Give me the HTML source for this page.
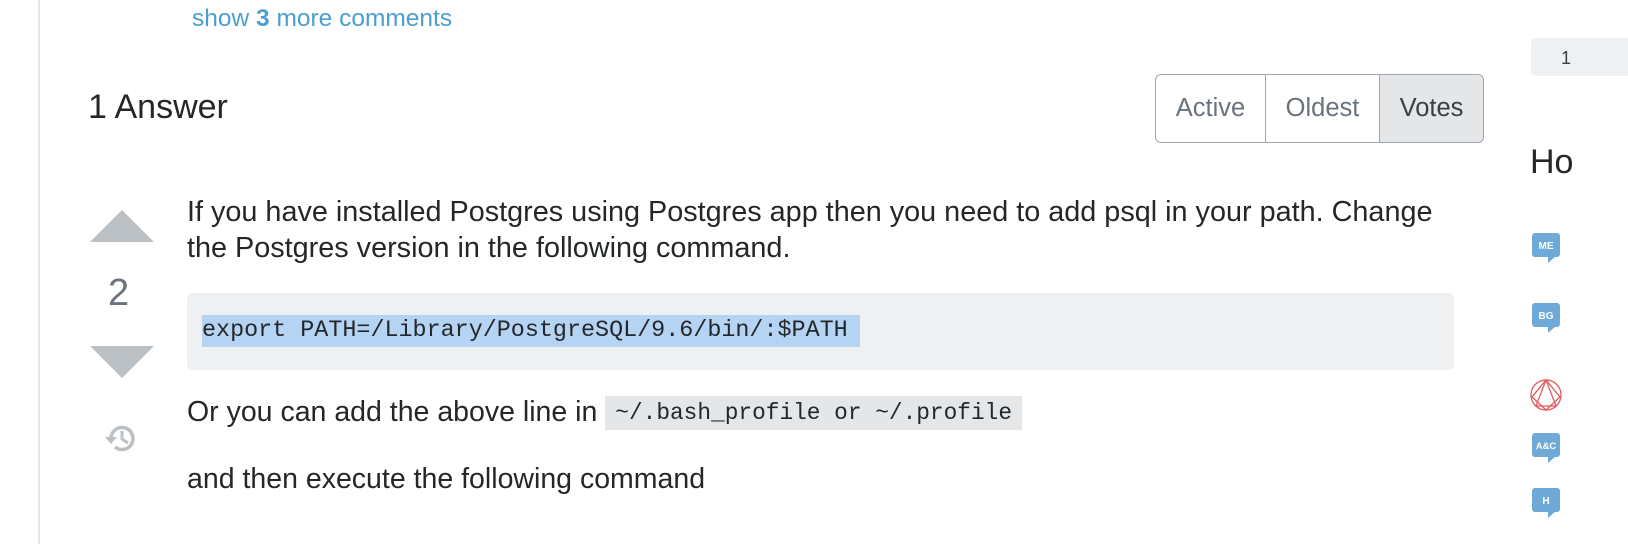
<!DOCTYPE html>
<html><head><meta charset="utf-8"><style>
body{margin:0;width:1628px;height:544px;overflow:hidden;background:#fff;font-family:"Liberation Sans",Arial,sans-serif;position:relative;color:#242729}
.a{position:absolute;white-space:nowrap}
.mono{font-family:"Liberation Mono",monospace}
</style></head><body>
<div class="a" style="left:38px;top:0;width:2px;height:544px;background:#e4e6e8"></div>
<div class="a" style="left:192px;top:5px;font-size:24.5px;color:#4a9fd0">show <b>3</b> more comments</div>
<div class="a" style="left:88px;top:88px;font-size:34px;color:#242729">1 Answer</div>
<div class="a" style="left:1155px;top:74px;width:327px;height:67px;border:1.5px solid #9fa6ad;border-radius:6px;overflow:hidden;display:flex;font-size:25.5px;color:#6a737c">
 <div style="width:109px;border-right:1.5px solid #9fa6ad;display:flex;align-items:center;justify-content:center">Active</div>
 <div style="width:113px;border-right:1.5px solid #9fa6ad;display:flex;align-items:center;justify-content:center">Oldest</div>
 <div style="flex:1;background:#e4e6e8;color:#3b4045;display:flex;align-items:center;justify-content:center">Votes</div>
</div>
<svg class="a" style="left:90px;top:210px" width="64" height="32"><polygon points="32,0 64,32 0,32" fill="#bbc0c4"/></svg>
<div class="a" style="left:108px;top:272px;font-size:38px;color:#6a737c">2</div>
<svg class="a" style="left:90px;top:346px" width="64" height="32"><polygon points="0,0 64,0 32,32" fill="#bbc0c4"/></svg>
<svg class="a" style="left:102px;top:420px" width="36" height="36" viewBox="0 0 36 36"><path d="M9 18 A11 11 0 1 1 13 27" fill="none" stroke="#bbc0c4" stroke-width="3.5"/><polygon points="3,17 15,17 9,24" fill="#bbc0c4"/><path d="M20 11 V19 L26 23" fill="none" stroke="#bbc0c4" stroke-width="3"/></svg>
<div class="a" style="left:187px;top:194px;font-size:28.8px;line-height:36px;white-space:normal;width:1267px">If you have installed Postgres using Postgres app then you need to add psql in your path. Change the Postgres version in the following command.</div>
<div class="a" style="left:187px;top:293px;width:1267px;height:77px;background:#eff0f1;border-radius:6px"></div>
<div class="a mono" style="left:202px;top:315px;font-size:23.4px;line-height:32px;background:#b5d3f3;padding-right:12px">export PATH=/Library/PostgreSQL/9.6/bin/:$PATH</div>
<div class="a" style="left:187px;top:396px;font-size:28.5px">Or you can add the above line in <span class="mono" style="font-size:22.8px;background:#e4e6e8;padding:4px 10px;vertical-align:2px">~/.bash_profile or ~/.profile</span></div>
<div class="a" style="left:187px;top:463px;font-size:28.5px">and then execute the following command</div>
<div class="a" style="left:1531px;top:38px;width:120px;height:38px;background:#eff0f1;border-radius:5px;font-size:18px;color:#3b4045;padding:10px 0 0 30px;box-sizing:border-box">1</div>
<div class="a" style="left:1530px;top:143px;font-size:34px;color:#242729">Ho</div>
<svg class="a" style="left:1532px;top:233px" width="30" height="40"><rect width="28" height="24" rx="3" fill="#6ea9d7"/><polygon points="16,23 24,23 16,30" fill="#6ea9d7"/><text x="14" y="16" font-size="10" font-weight="bold" fill="#fff" text-anchor="middle" font-family="Liberation Sans">ME</text></svg>
<svg class="a" style="left:1532px;top:303px" width="30" height="40"><rect width="28" height="24" rx="3" fill="#6ea9d7"/><polygon points="16,23 24,23 16,30" fill="#6ea9d7"/><text x="14" y="16" font-size="10" font-weight="bold" fill="#fff" text-anchor="middle" font-family="Liberation Sans">BG</text></svg>
<svg class="a" style="left:1530px;top:379px" width="34" height="34"><g fill="none" stroke="#dd5b60" stroke-width="1.3"><circle cx="16" cy="16" r="15"/><polygon points="16,1 30,18 16,31 2,18"/><polygon points="16,1 26,27 6,27"/></g></svg>
<svg class="a" style="left:1532px;top:433px" width="30" height="40"><rect width="28" height="24" rx="3" fill="#6ea9d7"/><polygon points="16,23 24,23 16,30" fill="#6ea9d7"/><text x="14" y="16" font-size="9.5" font-weight="bold" fill="#fff" text-anchor="middle" font-family="Liberation Sans">A&amp;C</text></svg>
<svg class="a" style="left:1532px;top:488px" width="30" height="40"><rect width="28" height="24" rx="3" fill="#6ea9d7"/><polygon points="16,23 24,23 16,30" fill="#6ea9d7"/><text x="14" y="16" font-size="10" font-weight="bold" fill="#fff" text-anchor="middle" font-family="Liberation Sans">H</text></svg>
</body></html>
